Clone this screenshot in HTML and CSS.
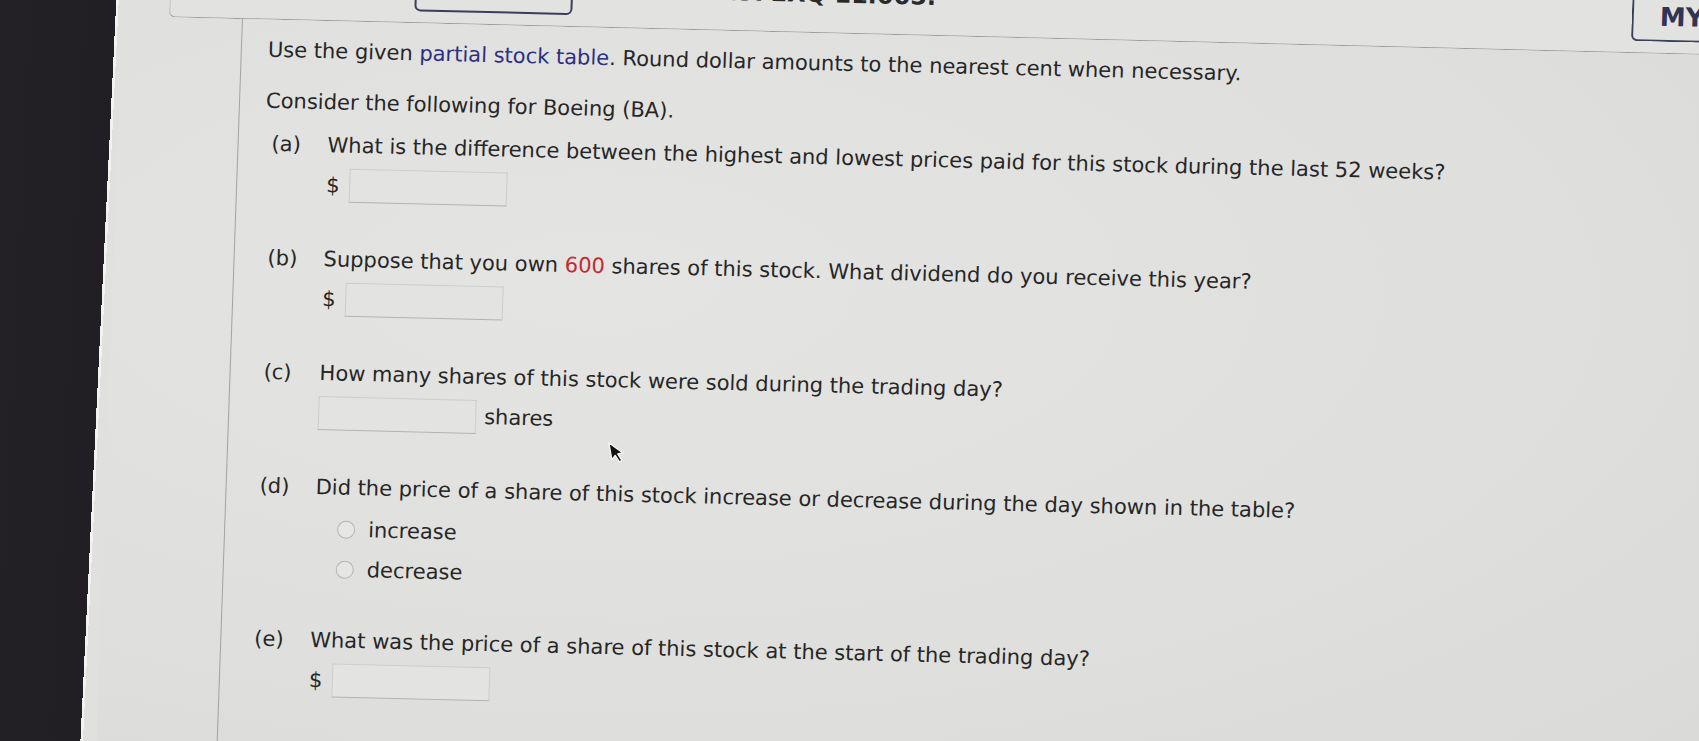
FILE: index.html
```html
<!DOCTYPE html>
<html lang="en">
<head>
<meta charset="utf-8">
<title>Boeing stock table question</title>
<link rel="stylesheet" href="styles.css">
</head>
<body>
<div class="screen">
  <div class="bezel"></div>
  <div class="page">
    <div class="topbar">
      <div class="header">
        <div class="btn btn-details">DETAILS</div>
        <div class="qid">AUFEXQ 11.005.</div>
        <div class="btn btn-notes">MY NOTES</div>
      </div>
    </div>
    <div class="body">
      <div class="gutter"></div>
      <div class="content">
        <p class="intro">Use the given <span class="link">partial stock table</span>. Round dollar amounts to the nearest cent when necessary.</p>
        <p class="intro second">Consider the following for Boeing (BA).</p>
        <ol class="parts">
          <li class="part">
            <span class="label">(a)</span>
            <span class="question">What is the difference between the highest and lowest prices paid for this stock during the last 52 weeks?</span>
            <div class="answer"><span class="dollar">$</span><span class="box"></span></div>
          </li>
          <li class="part">
            <span class="label">(b)</span>
            <span class="question">Suppose that you own <span class="red">600</span> shares of this stock. What dividend do you receive this year?</span>
            <div class="answer"><span class="dollar">$</span><span class="box"></span></div>
          </li>
          <li class="part">
            <span class="label">(c)</span>
            <span class="question">How many shares of this stock were sold during the trading day?</span>
            <div class="answer"><span class="box box-first"></span><span class="unit">shares</span></div>
          </li>
          <li class="part part-choice">
            <span class="label">(d)</span>
            <span class="question">Did the price of a share of this stock increase or decrease during the day shown in the table?</span>
            <div class="options">
              <div class="option"><span class="radio"></span><span>increase</span></div>
              <div class="option"><span class="radio"></span><span>decrease</span></div>
            </div>
          </li>
          <li class="part">
            <span class="label">(e)</span>
            <span class="question">What was the price of a share of this stock at the start of the trading day?</span>
            <div class="answer"><span class="dollar">$</span><span class="box"></span></div>
          </li>
        </ol>
        <svg class="cursor" width="15" height="25" viewBox="0 0 15 25" aria-hidden="true">
          <path d="M1.5 1.5 L1.5 19 L5.5 15.2 L8.6 22.5 L11.2 21.4 L8.2 14.3 L13.5 14.3 Z" fill="#141414" stroke="#f6f6f4" stroke-width="1.3" stroke-linejoin="round"/>
        </svg>
      </div>
    </div>
  </div>
</div>
</body>
</html>
```
FILE: styles.css
```css
html, body {
  margin: 0;
  padding: 0;
  height: 100%;
  overflow: hidden;
  background: #dcdcda;
}

.screen {
  width: 1779px;
  height: 821px;
  margin: -40px 0 0 -40px;
  display: flex;
  transform: rotate(1.4deg) skewX(-0.6deg);
  transform-origin: 50% 50%;
  font-family: "DejaVu Sans", Verdana, sans-serif;
  color: #262626;
  background: #e0e0de;
}

.bezel {
  width: 150px;
  flex-shrink: 0;
  background: linear-gradient(90.77deg, #232125 0, #211f23 144.5px, #f2f2f0 144.5px, #f2f2f0 147px, transparent 147px);
}

.page {
  flex: 1;
  display: flex;
  flex-direction: column;
  background: radial-gradient(ellipse at 30% 40%, #e4e4e2 0%, #dfdfdd 55%, #d9d9d7 100%);
}

.topbar {
  height: 74px;
  padding-left: 47px;
  display: flex;
}

.header {
  flex: 1;
  display: flex;
  align-items: flex-end;
  border-left: 1px solid #b4b4b2;
  border-bottom: 1px solid #9c9c9a;
  border-bottom-left-radius: 6px;
  background: #e2e2e0;
}

.btn {
  height: 50px;
  margin-bottom: 11px;
  box-sizing: border-box;
  border: 2px solid #3a3e5c;
  border-radius: 0 0 6px 6px;
  display: flex;
  align-items: center;
  font-weight: 700;
  color: #2f3454;
  flex-shrink: 0;
}

.btn-details {
  margin-left: 244px;
  width: 158px;
  justify-content: center;
  font-size: 20px;
}

.qid {
  margin-left: 144px;
  font-size: 24px;
  font-weight: 700;
  line-height: 24px;
  margin-bottom: 26px;
  color: #2a2a2a;
}

.btn-notes {
  margin-left: auto;
  width: 120px;
  border-right: none;
  border-radius: 0 0 0 6px;
  padding-left: 26px;
  font-size: 26px;
  font-weight: 600;
  white-space: nowrap;
  overflow: hidden;
}

.body {
  flex: 1;
  display: flex;
}

.gutter {
  width: 120px;
  flex-shrink: 0;
}

.content {
  flex: 1;
  position: relative;
  border-left: 1px solid #a2a2a0;
  padding: 15px 0 0 26px;
  font-size: 21px;
  line-height: 30px;
}

.intro {
  margin: 0 0 21px 0;
}

.intro.second {
  margin-bottom: 13px;
}

.link {
  color: #2c2f80;
}

.red {
  color: #c42a30;
}

.parts {
  list-style: none;
  margin: 0 0 0 7px;
  padding: 0;
}

.part {
  display: grid;
  grid-template-columns: 56px 1fr;
  margin-bottom: 41px;
}

.part-choice {
  margin-bottom: 36px;
}

.label {
  grid-column: 1;
}

.question {
  grid-column: 2;
}

.answer {
  grid-column: 2;
  margin-top: 7px;
  height: 36px;
  display: flex;
  align-items: center;
}

.dollar {
  width: 23px;
}

.box {
  width: 158px;
  height: 34px;
  box-sizing: border-box;
  border: 1px solid #cdcdcb;
  border-bottom-color: #b3b3b1;
  background: #e3e3e1;
}

.unit {
  margin-left: 8px;
}

.options {
  grid-column: 2;
  margin-top: 7px;
}

.option {
  height: 40px;
  display: flex;
  align-items: center;
  padding-left: 23px;
}

.radio {
  width: 18px;
  height: 18px;
  box-sizing: border-box;
  border: 1.5px solid #b4b4b2;
  border-radius: 50%;
  background: #e6e6e4;
  margin-right: 13px;
}

.cursor {
  position: absolute;
  left: 379px;
  top: 413px;
  transform: rotate(-12deg);
  transform-origin: 1.5px 1.5px;
}
```
